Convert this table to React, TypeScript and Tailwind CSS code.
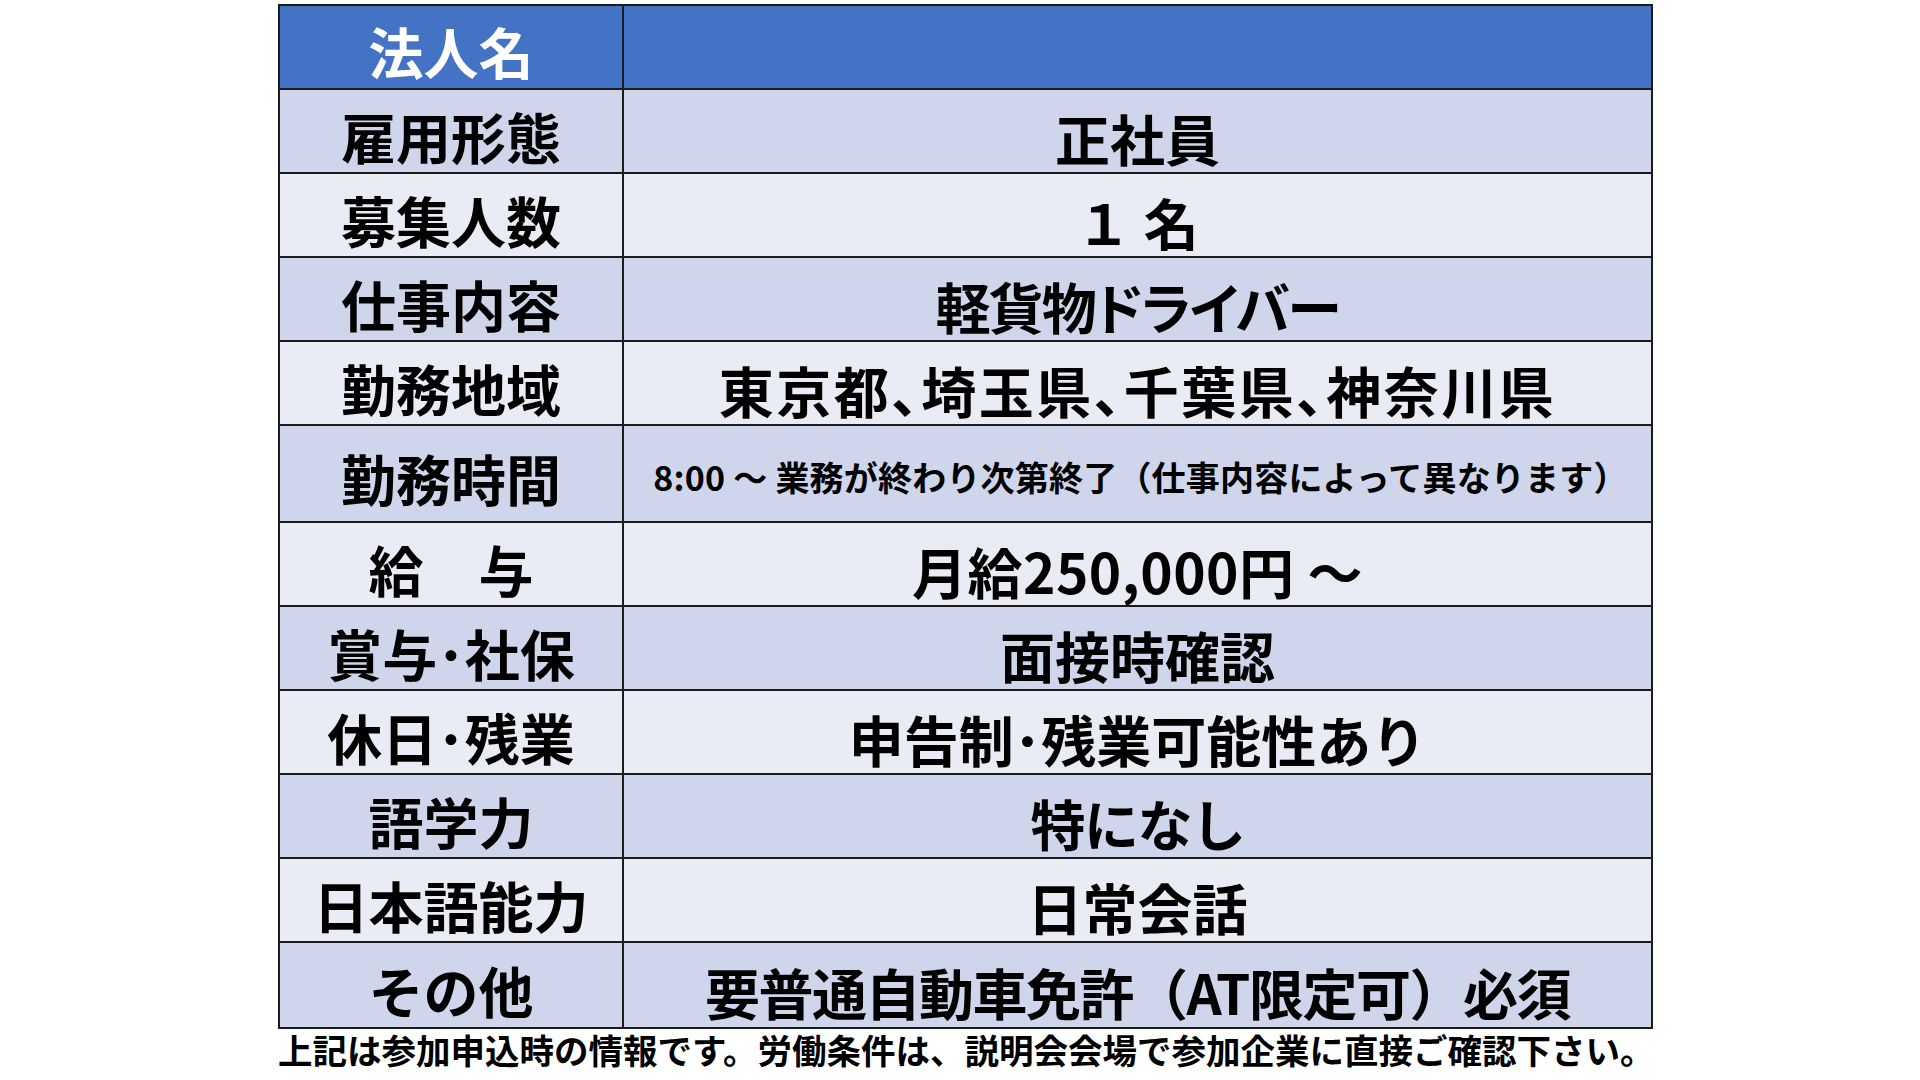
const rows: { label: string; value: string; tone: "dark" | "light"; tall?: boolean; cls: string }[] = [
  { label: "雇用形態", value: "正社員", tone: "dark", cls: "pt-[12px] text-[55px]" },
  { label: "募集人数", value: "１ 名", tone: "light", cls: "pt-[12px] text-[55px]" },
  { label: "仕事内容", value: "軽貨物ドライバー", tone: "dark", cls: "pt-[12px] text-[55px] [font-feature-settings:'palt'] tracking-[-2px]" },
  { label: "勤務地域", value: "東京都、埼玉県、千葉県、神奈川県", tone: "light", cls: "pt-[12px] text-[55px] [font-feature-settings:'palt'] tracking-[2.5px]" },
  { label: "勤務時間", value: "8:00 ～ 業務が終わり次第終了（仕事内容によって異なります）", tone: "dark", tall: true, cls: "pt-[6px] pl-[6px] text-[34px] tracking-[0.2px]" },
  { label: "給　与", value: "月給250,000円 ～", tone: "light", cls: "pt-[12px] text-[55px] tracking-[0.5px]" },
  { label: "賞与･社保", value: "面接時確認", tone: "dark", cls: "pt-[12px] text-[55px]" },
  { label: "休日･残業", value: "申告制･残業可能性あり", tone: "light", cls: "pt-[12px] text-[55px]" },
  { label: "語学力", value: "特になし", tone: "dark", cls: "pt-[12px] text-[55px] tracking-[-1.5px]" },
  { label: "日本語能力", value: "日常会話", tone: "light", cls: "pt-[12px] text-[55px]" },
  { label: "その他", value: "要普通自動車免許（AT限定可）必須", tone: "dark", cls: "pt-[12px] text-[55px] tracking-[-1.5px]" },
];

export default function App() {
  return (
    <main className="min-h-screen w-[1920px] h-[1080px] overflow-hidden bg-white font-['Noto_Sans_CJK_JP',sans-serif] font-bold text-black">
      <div className="ml-[278px] pt-[4px] w-[1375px]">
        <div className="border-2 border-[#1c1c1c]">
          <div className="grid h-[84px] grid-cols-[344px_1fr] border-b-2 border-[#1c1c1c] bg-[#4472c4]">
            <div className="flex items-center justify-center border-r-2 border-[#1c1c1c] pt-[6px] text-[55px] leading-none text-white">
              法人名
            </div>
            <div />
          </div>
          {rows.map((r, i) => (
            <div
              key={r.label}
              className={[
                "grid grid-cols-[344px_1fr]",
                r.tall ? "h-[97px]" : "h-[84px]",
                r.tone === "dark" ? "bg-[#cfd5ea]" : "bg-[#e9ebf5]",
                i < rows.length - 1 ? "border-b-2 border-[#1c1c1c]" : "",
              ].join(" ")}
            >
              <div className="flex items-center justify-center border-r-2 border-[#1c1c1c] pt-[8px] text-[55px] leading-none">
                {r.label}
              </div>
              <div className={"flex items-center justify-center leading-none " + r.cls}>{r.value}</div>
            </div>
          ))}
        </div>
      </div>
      <p className="ml-[278px] mt-[3px] text-[34.5px] leading-none">
        上記は参加申込時の情報です。労働条件は、説明会会場で参加企業に直接ご確認下さい。
      </p>
    </main>
  );
}
